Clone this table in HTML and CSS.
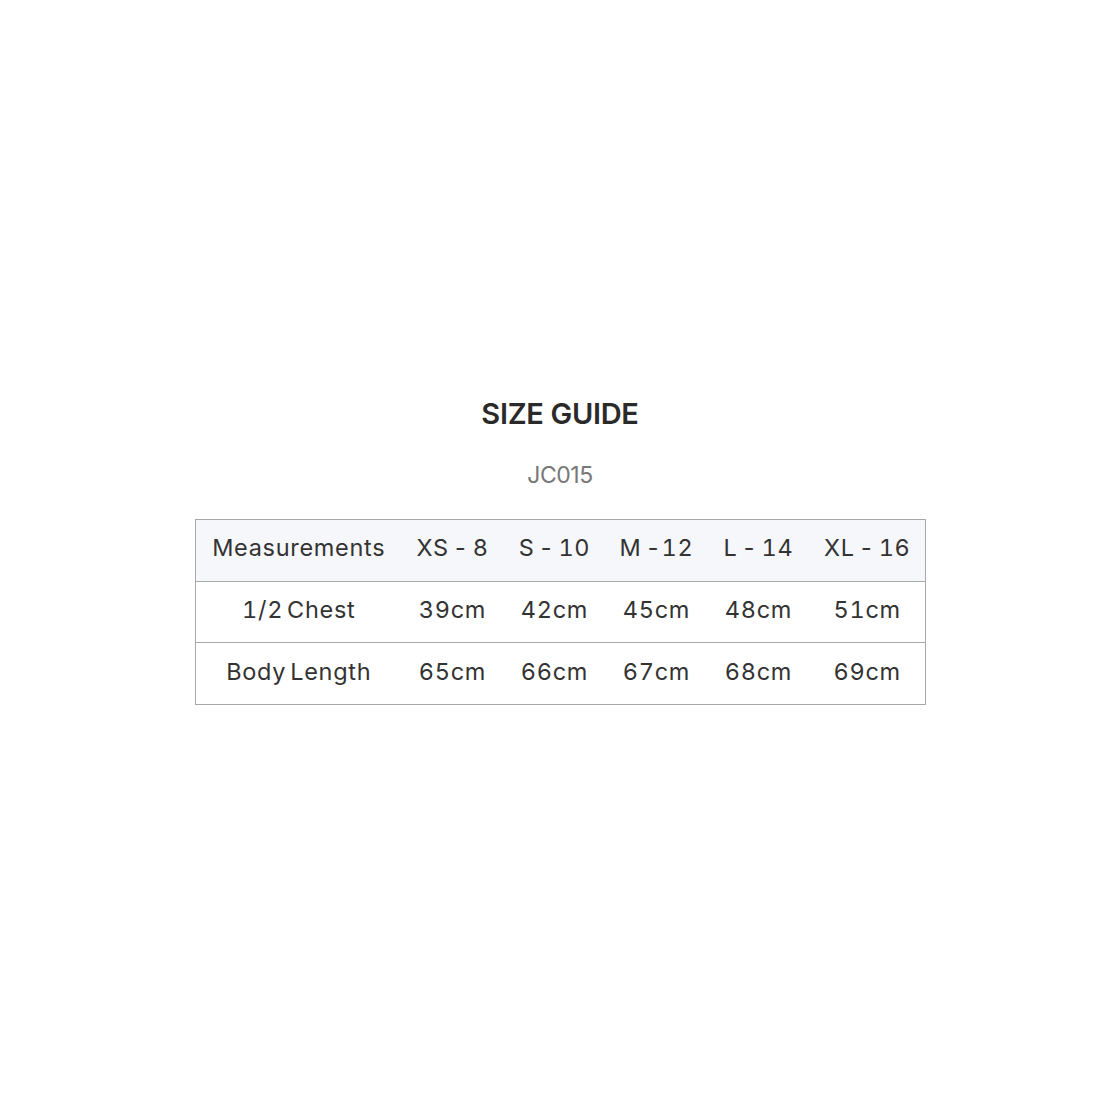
FILE: index.html
```html
<!DOCTYPE html>
<html>
<head>
<meta charset="utf-8">
<link rel="stylesheet" href="styles.css">
</head>
<body>
<div class="page">
  <section class="guide">
    <h1 class="title">SIZE GUIDE</h1>
    <p class="code">JC015</p>
    <table class="sizes">
      <colgroup>
        <col class="c-first"><col class="c-mid"><col class="c-mid"><col class="c-mid"><col class="c-mid"><col class="c-last">
      </colgroup>
      <tr class="head">
        <td>Measurements</td><td>XS - 8</td><td>S - 10</td><td>M -12</td><td>L - 14</td><td>XL - 16</td>
      </tr>
      <tr>
        <td>1/2 Chest</td><td>39cm</td><td>42cm</td><td>45cm</td><td>48cm</td><td>51cm</td>
      </tr>
      <tr>
        <td>Body Length</td><td>65cm</td><td>66cm</td><td>67cm</td><td>68cm</td><td>69cm</td>
      </tr>
    </table>
  </section>
</div>
</body>
</html>
```
FILE: styles.css
```css
html, body {
  margin: 0;
  padding: 0;
  background: #ffffff;
}
.page {
  width: 1120px;
  height: 1120px;
  display: flex;
  justify-content: center;
  font-family: Inter, "Liberation Sans", sans-serif;
  color: #333333;
}
.guide {
  padding-top: 394px;
  display: flex;
  flex-direction: column;
  align-items: center;
}
.title {
  margin: 0;
  font-size: 29px;
  line-height: 40px;
  font-weight: 600;
  letter-spacing: -0.3px;
  color: #2a2a2a;
}
.code {
  margin: 26px 0 0;
  font-size: 23px;
  line-height: 30px;
  color: #777777;
  letter-spacing: -0.5px;
}
.sizes {
  margin-top: 29px;
  margin-left: 1px;
  border-collapse: collapse;
  border: 1.5px solid #a9a9a9;
  table-layout: fixed;
  width: 730px;
}
.c-first { width: 206px; }
.c-mid { width: 102px; }
.c-last { width: 116px; }
.sizes td {
  height: 61.7px;
  padding: 0 0 5px;
  box-sizing: border-box;
  text-align: center;
  font-size: 23.5px;
  letter-spacing: 0.7px;
  word-spacing: -3px;
  font-variant-numeric: tabular-nums;
  color: #333333;
  border-top: 1.5px solid #a9a9a9;
  white-space: nowrap;
}
.sizes .head td {
  background: #f6f7fb;
  border-top: none;
}
```
